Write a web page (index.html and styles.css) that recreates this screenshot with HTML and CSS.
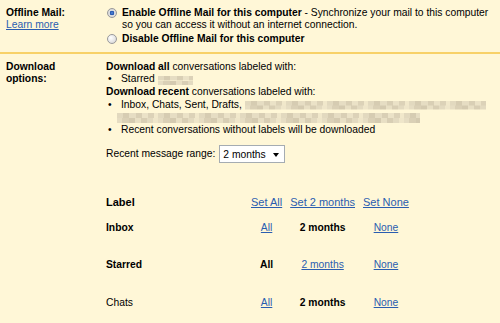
FILE: index.html
```html
<!DOCTYPE html>
<html lang="en">
<head>
    <meta charset="UTF-8">
    <title>Offline Mail settings</title>
    <link rel="stylesheet" href="styles.css">
</head>
<body>
    <table class="settings">
        <!-- Activar / desactivar -->
        <tr class="row-first">
            <th class="name">
                Offline Mail:<br>
                <a href="#">Learn more</a>
            </th>
            <td class="value">
                <label class="choice">
                    <input type="radio" name="offline" checked>
                    <span><b>Enable Offline Mail for this computer</b> - Synchronize your mail to this computer<br>so you can access it without an internet connection.</span>
                </label>
                <label class="choice choice-second">
                    <input type="radio" name="offline">
                    <span><b>Disable Offline Mail for this computer</b></span>
                </label>
            </td>
        </tr>

        <!-- Opciones de descarga -->
        <tr>
            <th class="name">Download<br>options:</th>
            <td class="value">
                <div class="lines">
                    <div><b>Download all</b> conversations labeled with:</div>
                    <ul>
                        <li>Starred <span class="blur blur-short"></span></li>
                    </ul>
                    <div><b>Download recent</b> conversations labeled with:</div>
                    <ul>
                        <li>Inbox, Chats, Sent, Drafts, <span class="blur blur-long"></span><br><span class="blur blur-wrap"></span></li>
                        <li>Recent conversations without labels will be downloaded</li>
                    </ul>
                </div>

                <div class="range">
                    Recent message range:
                    <span class="select-wrap">
                        <select class="select">
                            <option>2 months</option>
                        </select>
                    </span>
                </div>

                <table class="labels">
                    <thead>
                        <tr>
                            <th class="label-col">Label</th>
                            <th><a href="#">Set All</a></th>
                            <th><a href="#">Set 2 months</a></th>
                            <th><a href="#">Set None</a></th>
                        </tr>
                    </thead>
                    <tbody>
                        <tr>
                            <td class="label-col"><b>Inbox</b></td>
                            <td><a href="#">All</a></td>
                            <td><b>2 months</b></td>
                            <td><a href="#">None</a></td>
                        </tr>
                        <tr>
                            <td class="label-col"><b>Starred</b></td>
                            <td><b>All</b></td>
                            <td><a href="#">2 months</a></td>
                            <td><a href="#">None</a></td>
                        </tr>
                        <tr>
                            <td class="label-col">Chats</td>
                            <td><a href="#">All</a></td>
                            <td><b>2 months</b></td>
                            <td><a href="#">None</a></td>
                        </tr>
                    </tbody>
                </table>
            </td>
        </tr>
    </table>
</body>
</html>
```

FILE: styles.css
```css
body {
    margin: 0;
    background: #fff7d7;
    font-family: "Liberation Sans", Arial, sans-serif;
    font-size: 10.3px;
    color: #000;
}
a {
    color: #2a5db0;
}
.settings {
    width: 100%;
    border-collapse: collapse;
}
.name {
    width: 100px;
    padding: 7px 0 7px 6px;
    text-align: left;
    vertical-align: top;
    font-weight: bold;
    line-height: 12px;
}
.name a {
    font-weight: normal;
}
.value {
    padding: 7px 6px 7px 0;
    vertical-align: top;
}
.row-first th,
.row-first td {
    border-bottom: 2px solid #f8d168;
}

/* radios */
.choice {
    display: flex;
    align-items: flex-start;
    line-height: 11.6px;
}
.choice-second {
    margin-top: 3px;
}
.choice input {
    appearance: none;
    width: 10px;
    height: 10px;
    margin: 1px 5px 0 1px;
    border: 1px solid #9a9a9a;
    border-radius: 50%;
    background: radial-gradient(circle at 35% 35%, #ffffff 0, #e4e4e4 60%, #c9c9c9 100%);
    flex-shrink: 0;
}
.choice input:checked {
    background: radial-gradient(circle at 50% 50%, #5a8ee0 0, #1f4fa8 2px, #e4e4e4 2.6px, #c9c9c9 100%);
}

/* descarga */
.lines {
    line-height: 12.6px;
}
.lines ul {
    margin: 0;
    padding: 0;
    list-style: none;
}
.lines li {
    padding-left: 15px;
    text-indent: -15px;
}
.lines li::before {
    content: "•";
    display: inline-block;
    width: 13px;
    padding-left: 2px;
    text-indent: 0;
}
.blur {
    display: inline-block;
    height: 9px;
    text-indent: 0;
    background:
        repeating-linear-gradient(90deg, #e2d9bf 0 6px, #d6ccb2 6px 12px, #e6ddc3 12px 19px, #d9cfb5 19px 25px, #ebe2c7 25px 31px, #dcd2b8 31px 37px, #f1e8cb 37px 41px) top / 100% 50% no-repeat,
        repeating-linear-gradient(90deg, #e6ddc3 0 5px, #dad0b6 5px 12px, #d4cab0 12px 18px, #e8dfc4 18px 24px, #d8ceb4 24px 30px, #e3dac0 30px 36px, #efe6ca 36px 41px) bottom / 100% 50% no-repeat;
}
.blur-short {
    width: 35px;
    vertical-align: -3px;
}
.blur-long {
    width: 241px;
    vertical-align: -2px;
}
.blur-wrap {
    width: 303px;
    height: 10px;
    margin-left: -4px;
    vertical-align: -3px;
}

/* rango */
.range {
    display: flex;
    align-items: center;
    gap: 4px;
    margin-top: 9px;
    height: 18px;
    line-height: 12.6px;
}
.select-wrap {
    position: relative;
    display: inline-block;
}
.select {
    appearance: none;
    width: 66px;
    height: 18px;
    margin: 0;
    padding: 0 0 0 3px;
    border: 1px solid #a5acb2;
    border-radius: 0;
    background: #fff;
    font-family: inherit;
    font-size: 10.3px;
    color: #000;
}
.select-wrap::after {
    content: "";
    position: absolute;
    right: 6px;
    top: 8px;
    border-left: 3.5px solid transparent;
    border-right: 3.5px solid transparent;
    border-top: 4px solid #000;
    pointer-events: none;
}

/* tabla de etiquetas */
.labels {
    margin-top: 20px;
    border-collapse: collapse;
}
.labels th,
.labels td {
    padding: 0 4px;
    text-align: center;
    line-height: 12.6px;
    white-space: nowrap;
}
.labels thead tr {
    height: 26px;
}
.labels thead th {
    vertical-align: bottom;
    padding-bottom: 1px;
    font-size: 11px;
    font-weight: normal;
}
.labels tbody tr {
    height: 37.5px;
}
.labels tbody td {
    vertical-align: middle;
}
.labels .label-col {
    width: 141px;
    padding: 0;
    text-align: left;
}
.labels thead .label-col {
    font-weight: bold;
    padding-bottom: 1px;
}
```
